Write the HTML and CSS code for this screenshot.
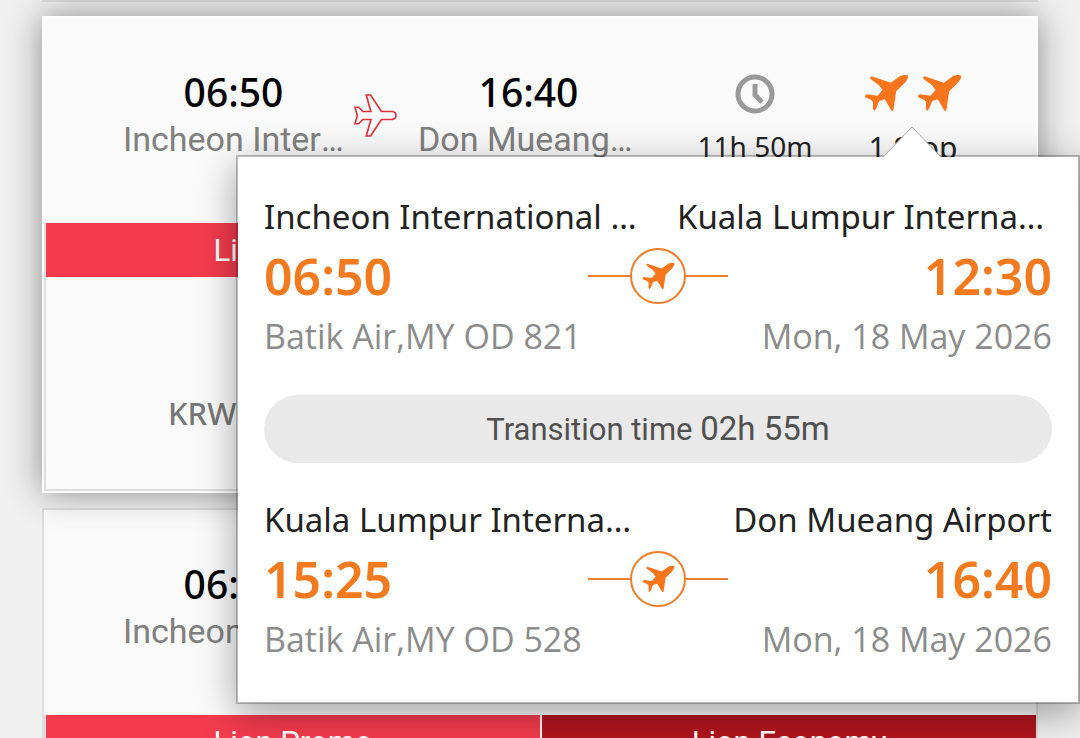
FILE: index.html
```html
<!DOCTYPE html>
<html lang="en">
<head>
<meta charset="utf-8">
<title>Flight results</title>
<link rel="stylesheet" href="styles.css">
</head>
<body>
<svg class="sprite" aria-hidden="true">
  <symbol id="jet" viewBox="0 0 134 114">
    <path d="M132 5C124 1 114 3 107 7L80 26L22 7Q17 8 18 14L44 33L55 48L40 65L8 61Q2 63 2 69L20 77L27 84L26 103Q27 110 31 110L36 104L45 81L62 76L81 109Q86 113 88 107L96 52L122 26C128 19 133 12 132 5Z" fill="#f9751b"/>
  </symbol>
</svg>
<main class="results">
  <div class="previous"></div>

  <article class="card card-active">
    <header class="summary">
      <div class="place">
        <div class="time">06:50</div>
        <div class="airport">Incheon International Airport</div>
      </div>
      <svg class="route" viewBox="0 0 130 130" aria-hidden="true"><path d="M115 53H83L50 3H37L51 53H27L14 40H3L10 65L3 90H14L27 77H51L37 127H50L83 77H115C131 75 131 55 115 53Z" fill="none" stroke="#e0303a" stroke-width="5"/></svg>
      <div class="place">
        <div class="time">16:40</div>
        <div class="airport">Don Mueang Airport</div>
      </div>
      <div class="fact fact-duration">
        <svg class="clock" viewBox="0 0 40 40" aria-hidden="true"><circle cx="20" cy="20" r="17" fill="none" stroke="#999" stroke-width="5"/><path d="M20 10V21L27 28" fill="none" stroke="#999" stroke-width="5"/></svg>
        <div class="fact-text">11h 50m</div>
      </div>
      <div class="fact fact-stops">
        <div class="jets">
          <svg class="jet" aria-hidden="true"><use href="#jet"/></svg>
          <svg class="jet" aria-hidden="true"><use href="#jet"/></svg>
        </div>
        <div class="fact-text">1 Stop</div>
      </div>
    </header>
    <div class="fares">
      <div class="fare">
        <div class="fare-name">Lion Promo</div>
        <div class="price">KRW</div>
      </div>
      <div class="fare">
        <div class="fare-name fare-name-dark">Lion Economy</div>
      </div>
    </div>

    <section class="popup" aria-label="Flight details">
      <svg class="arrow" viewBox="0 0 60 32" aria-hidden="true"><path d="M1 31L30 1L59 31" fill="#fff" stroke="#aaa" stroke-width="1"/></svg>
      <div class="leg">
        <div class="row names"><span class="name">Incheon International Airport</span><span class="name">Kuala Lumpur International Airport</span></div>
        <div class="row times"><span>06:50</span><span class="link"><span class="ring"><svg class="jet-small" aria-hidden="true"><use href="#jet"/></svg></span></span><span class="end">12:30</span></div>
        <div class="row notes"><span>Batik Air,MY OD 821</span><span>Mon, 18 May 2026</span></div>
      </div>
      <div class="transition">Transition time <span class="wait">02h 55m</span></div>
      <div class="leg">
        <div class="row names"><span class="name">Kuala Lumpur International Airport</span><span class="name">Don Mueang Airport</span></div>
        <div class="row times"><span>15:25</span><span class="link"><span class="ring"><svg class="jet-small" aria-hidden="true"><use href="#jet"/></svg></span></span><span class="end">16:40</span></div>
        <div class="row notes"><span>Batik Air,MY OD 528</span><span>Mon, 18 May 2026</span></div>
      </div>
    </section>
  </article>

  <article class="card">
    <header class="summary">
      <div class="place">
        <div class="time">06:50</div>
        <div class="airport">Incheon International Airport</div>
      </div>
    </header>
    <div class="fares">
      <div class="fare"><div class="fare-name">Lion Promo</div></div>
      <div class="fare"><div class="fare-name fare-name-dark">Lion Economy</div></div>
    </div>
  </article>
</main>
</body>
</html>
```

FILE: styles.css
```css
* { box-sizing: border-box; }

body {
  margin: 0;
  height: 100vh;
  overflow: hidden;
  background: #f0f0f0;
  font-family: "Noto Sans", "Open Sans", sans-serif;
}

.sprite { position: absolute; width: 0; height: 0; }

.results { padding: 0 42px; }

.previous {
  height: 2px;
  margin-bottom: 14px;
  background: #dcdcdc;
}

.card {
  margin-bottom: 15px;
  background: #fafafa;
  border: 2px solid #ddd;
}

.card-active {
  position: relative;
  z-index: 1;
  border-color: #fff;
  box-shadow: 0 0 32px rgba(0, 0, 0, 0.42);
}

.summary {
  display: grid;
  grid-template-columns: 221fr 74fr 221fr 37fr 158fr 158fr;
  align-items: start;
  min-height: 205px;
  padding: 46px 44px 0 79px;
}

.place { min-width: 0; text-align: center; }

.time {
  font-size: 39px;
  font-weight: 500;
  line-height: 56px;
  color: #000;
}

.airport {
  overflow: hidden;
  font-family: Roboto, sans-serif;
  font-size: 34px;
  line-height: 38px;
  text-align: left;
  text-overflow: ellipsis;
  white-space: nowrap;
  color: #808080;
}

.route { width: 43px; height: 43px; margin: 30px 0 0 10px; }

.fact {
  display: flex;
  flex-direction: column;
  align-items: center;
  gap: 12px;
  padding-top: 10px;
}

.fact-duration { grid-column: 5; }

.clock { width: 40px; height: 40px; }

.fact-stops { gap: 14px; }

.jets { display: flex; gap: 8px; height: 40px; }

.jet { width: 45px; height: 38px; }

.fact-text { font-size: 28px; line-height: 40px; color: #222; }

.fact-stops .fact-text { font-size: 30px; }

.fares {
  display: grid;
  grid-template-columns: 1fr 1fr;
  column-gap: 2px;
  border: 2px solid #ddd;
  border-top: 0;
  border-right: 0;
}

.fare { min-height: 266px; }

.fare-name {
  padding-top: 2px;
  background: #f43b4e;
  color: #fff;
  font-family: Roboto, sans-serif;
  font-size: 31px;
  line-height: 52px;
  text-align: center;
}

.fare-name-dark { background: #b1151e; }

.price {
  padding: 112px 0 0 122px;
  font-size: 31px;
  font-weight: 500;
  line-height: 48px;
  color: #777;
}

.popup {
  position: absolute;
  top: 137px;
  left: 192px;
  right: -44px;
  padding: 36px 26px 38px;
  background: #fff;
  background-clip: padding-box;
  border: 2px solid rgba(0, 0, 0, 0.25);
  box-shadow: 0 10px 36px rgba(0, 0, 0, 0.35);
}

.arrow {
  position: absolute;
  top: -31px;
  right: 136px;
  width: 60px;
  height: 32px;
}

.row {
  display: flex;
  justify-content: space-between;
  align-items: center;
}

.names { font-size: 33px; line-height: 48px; color: #222; }

.name {
  max-width: 375px;
  overflow: hidden;
  text-overflow: ellipsis;
  white-space: nowrap;
}

.times {
  display: grid;
  grid-template-columns: 1fr 140px 1fr;
  font-size: 50px;
  font-weight: 600;
  line-height: 70px;
  color: #f47a20;
}

.end { text-align: right; }

.link {
  display: flex;
  justify-content: center;
  background: linear-gradient(#e9802f, #e9802f) center / 100% 2px no-repeat;
}

.ring {
  display: flex;
  align-items: center;
  justify-content: center;
  width: 56px;
  height: 56px;
  background: #fff;
  border: 2px solid #f07b26;
  border-radius: 50%;
}

.jet-small { width: 33px; height: 28px; }

.notes {
  font-family: "Open Sans", sans-serif;
  font-size: 34px;
  line-height: 50px;
  color: #8c8c8c;
}

.transition {
  margin: 34px 0 33px;
  background: #e9e9e9;
  border-radius: 34px;
  font-family: Roboto, sans-serif;
  font-size: 31px;
  line-height: 67px;
  text-align: center;
  color: #505050;
}

.wait { font-size: 33px; }
```
